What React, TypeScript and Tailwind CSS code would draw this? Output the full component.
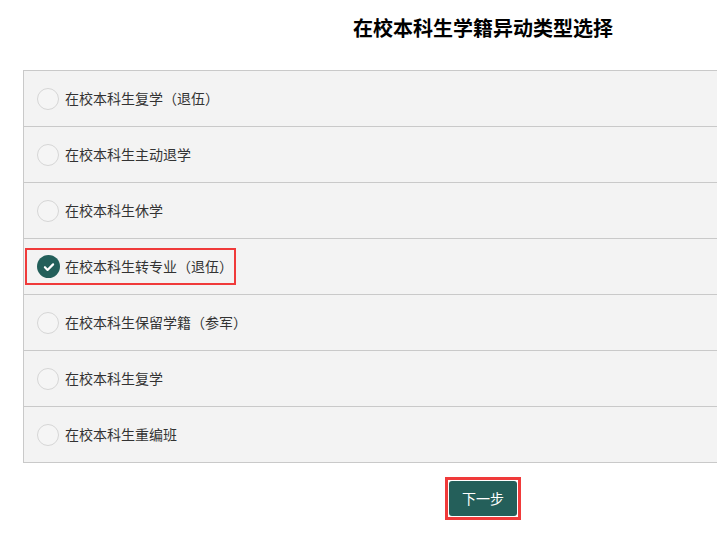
import React from "react";

const items = [
  "在校本科生复学（退伍）",
  "在校本科生主动退学",
  "在校本科生休学",
  "在校本科生转专业（退伍）",
  "在校本科生保留学籍（参军）",
  "在校本科生复学",
  "在校本科生重编班",
];

const font = { fontFamily: '"Microsoft YaHei", "Noto Sans CJK SC", sans-serif' };

export default function App() {
  const selected = 3;
  return (
    <div className="bg-white min-h-[533px] overflow-hidden" style={font}>
      <div className="w-[920px] ml-[23px]">
        <h1 className="text-center text-[20px] leading-[28px] font-bold text-black pt-[14px]">
          在校本科生学籍异动类型选择
        </h1>
        <div className="mt-[28px] border border-[#c9c9c9] bg-[#f3f3f3]">
          {items.map((t, i) => (
            <div
              key={i}
              className={`flex items-center ${i < items.length - 1 ? "h-[56px] border-b border-[#c9c9c9]" : "h-[55px]"}`}
            >
              {i === selected ? (
                <div className="ml-[1px] h-[37px] flex items-center border-2 border-[#f03a3a] pl-[10px] pr-[1px]">
                  <span className="w-[23px] h-[23px] rounded-full bg-[#235f5a] flex items-center justify-center">
                    <svg width="14" height="14" viewBox="0 0 24 24" fill="none" stroke="white" strokeWidth="3.8" strokeLinecap="round" strokeLinejoin="round">
                      <path d="M5 12.5l4.5 4.5L19 7.5" />
                    </svg>
                  </span>
                  <span className="ml-[5px] text-[14px] text-[#333]">{t}</span>
                </div>
              ) : (
                <div className="ml-[13px] flex items-center">
                  <span className="w-[22px] h-[22px] rounded-full border border-[#d6d6d6] bg-[#f5f5f5]" />
                  <span className="ml-[6px] text-[14px] text-[#333]">{t}</span>
                </div>
              )}
            </div>
          ))}
        </div>
        <div className="flex justify-center mt-[14px]">
          <div className="border-[3px] border-[#f03a3a] p-[1px] bg-white">
            <button className="w-[68px] h-[35px] rounded-[3px] bg-[#245f5a] text-white text-[14px]">
              下一步
            </button>
          </div>
        </div>
      </div>
    </div>
  );
}
